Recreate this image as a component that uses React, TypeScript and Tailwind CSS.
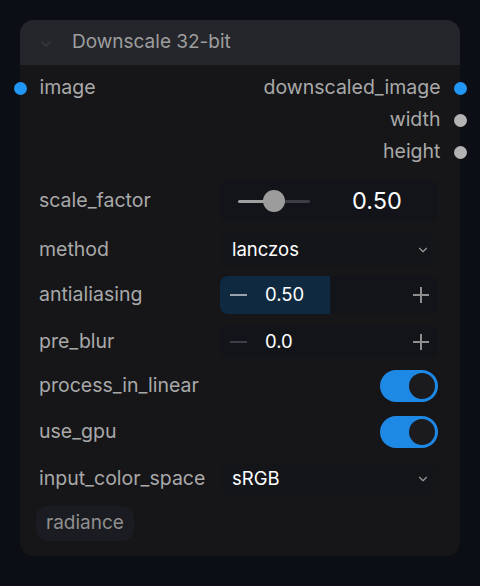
import React from "react";

const Dot = ({ color }: { color: string }) => (
  <span className={`block w-[13px] h-[13px] rounded-full ${color}`} />
);

const Chevron = ({ cls, size = 14 }: { cls: string; size?: number }) => (
  <svg width={size} height={size} viewBox="0 0 24 24" fill="none" stroke="currentColor" strokeWidth="2" strokeLinecap="round" strokeLinejoin="round" className={cls}>
    <path d="M6 9l6 6 6-6" />
  </svg>
);

const Plus = () => (
  <svg width="18" height="18" viewBox="0 0 18 18" className="ml-auto mr-[8px]">
    <path d="M9 1v16M1 9h16" stroke="#8e8e8e" strokeWidth="2" />
  </svg>
);

const Toggle = () => (
  <div className="w-[58px] h-[32px] rounded-full bg-[#1e88e5] flex items-center justify-end pr-[3px]">
    <div className="w-[26px] h-[26px] rounded-full bg-[#1b1b1d]" />
  </div>
);

const Label = ({ children }: { children: React.ReactNode }) => (
  <span className="text-[19.5px] text-[#a9a9a9]">{children}</span>
);

export default function App() {
  return (
    <div className="w-[480px] h-[586px] bg-[#0b0e14] pt-[20px] pl-[20px] font-['Inter',sans-serif]">
      <div className="w-[440px] h-[536px] rounded-[14px] bg-[#161619] relative">
        <div className="h-[45px] rounded-t-[14px] bg-[#25262b] flex items-center pl-[18px] gap-[18px]">
          <Chevron cls="text-[#3a3c42] mt-[2px]" size={16} />
          <span className="text-[19px] text-[#9e9e9e]">Downscale 32-bit</span>
        </div>

        <div className="relative pt-[7px]">
          <div className="h-[32px] flex items-center justify-between">
            <div className="flex items-center -ml-[6.5px] gap-[13px]">
              <Dot color="bg-[#2196f3]" />
              <Label>image</Label>
            </div>
            <div className="flex items-center -mr-[6.5px] gap-[13px]">
              <Label>downscaled_image</Label>
              <Dot color="bg-[#2196f3]" />
            </div>
          </div>
          <div className="h-[32px] flex items-center justify-end -mr-[6.5px] gap-[13px]">
            <Label>width</Label>
            <Dot color="bg-[#b3b3b3]" />
          </div>
          <div className="h-[32px] flex items-center justify-end -mr-[6.5px] gap-[13px]">
            <Label>height</Label>
            <Dot color="bg-[#b3b3b3]" />
          </div>
        </div>

        <div className="flex flex-col pl-[19px] pr-[22px] mt-[12px]">
          {/* scale_factor */}
          <div className="h-[42px] flex items-center">
            <div className="w-[181px]"><Label>scale_factor</Label></div>
            <div className="flex-1 h-[42px] rounded-[8px] bg-[#121419] flex items-center">
              <div className="relative w-[72px] h-[22px] ml-[18px] flex items-center">
                <div className="absolute left-0 w-[36px] h-[3px] bg-[#a0a0a0] rounded" />
                <div className="absolute left-[36px] right-0 h-[3px] bg-[#3a3d44] rounded" />
                <div className="absolute left-[25px] w-[22px] h-[22px] rounded-full bg-[#9c9c9c]" />
              </div>
              <span className="ml-[42px] text-[23.5px] text-white">0.50</span>
            </div>
          </div>
          {/* method */}
          <div className="h-[36px] mt-[10px] flex items-center">
            <div className="w-[181px]"><Label>method</Label></div>
            <div className="flex-1 h-[36px] rounded-[8px] bg-[#131519] flex items-center justify-between pl-[12px] pr-[8px]">
              <span className="text-[18.5px] text-white">lanczos</span>
              <Chevron cls="text-[#9a9a9a]" />
            </div>
          </div>
          {/* antialiasing */}
          <div className="h-[38px] mt-[8px] flex items-center">
            <div className="w-[181px]"><Label>antialiasing</Label></div>
            <div className="flex-1 h-[38px] rounded-[8px] bg-[#121419] flex items-center relative overflow-hidden">
              <div className="absolute left-0 top-0 bottom-0 w-[110px] bg-[#0f2a40]" />
              <span className="relative ml-[10px] w-[17px] h-[2px] bg-[#9aa3ab]" />
              <span className="relative ml-[18px] text-[18.5px] text-white">0.50</span>
              <span className="relative ml-auto flex"><Plus /></span>
            </div>
          </div>
          {/* pre_blur */}
          <div className="h-[33px] mt-[11px] flex items-center">
            <div className="w-[181px]"><Label>pre_blur</Label></div>
            <div className="flex-1 h-[33px] rounded-[8px] bg-[#121419] flex items-center">
              <span className="ml-[10px] w-[17px] h-[2px] bg-[#3d4046]" />
              <span className="ml-[18px] text-[18.5px] text-white">0.0</span>
              <Plus />
            </div>
          </div>
          {/* process_in_linear */}
          <div className="h-[32px] mt-[12px] flex items-center justify-between">
            <Label>process_in_linear</Label>
            <Toggle />
          </div>
          {/* use_gpu */}
          <div className="h-[32px] mt-[14px] flex items-center justify-between">
            <Label>use_gpu</Label>
            <Toggle />
          </div>
          {/* input_color_space */}
          <div className="h-[33px] mt-[14px] flex items-center">
            <div className="w-[181px]"><Label>input_color_space</Label></div>
            <div className="flex-1 h-[33px] rounded-[8px] bg-[#131519] flex items-center justify-between pl-[12px] pr-[8px]">
              <span className="text-[18.5px] text-white">sRGB</span>
              <Chevron cls="text-[#9a9a9a]" />
            </div>
          </div>
          <div className="mt-[11px]">
            <span className="inline-flex items-center h-[35px] px-[10px] -ml-[3px] rounded-[12px] bg-[#1a1c21] text-[19px] text-[#8f8f8f]">radiance</span>
          </div>
        </div>
      </div>
    </div>
  );
}
